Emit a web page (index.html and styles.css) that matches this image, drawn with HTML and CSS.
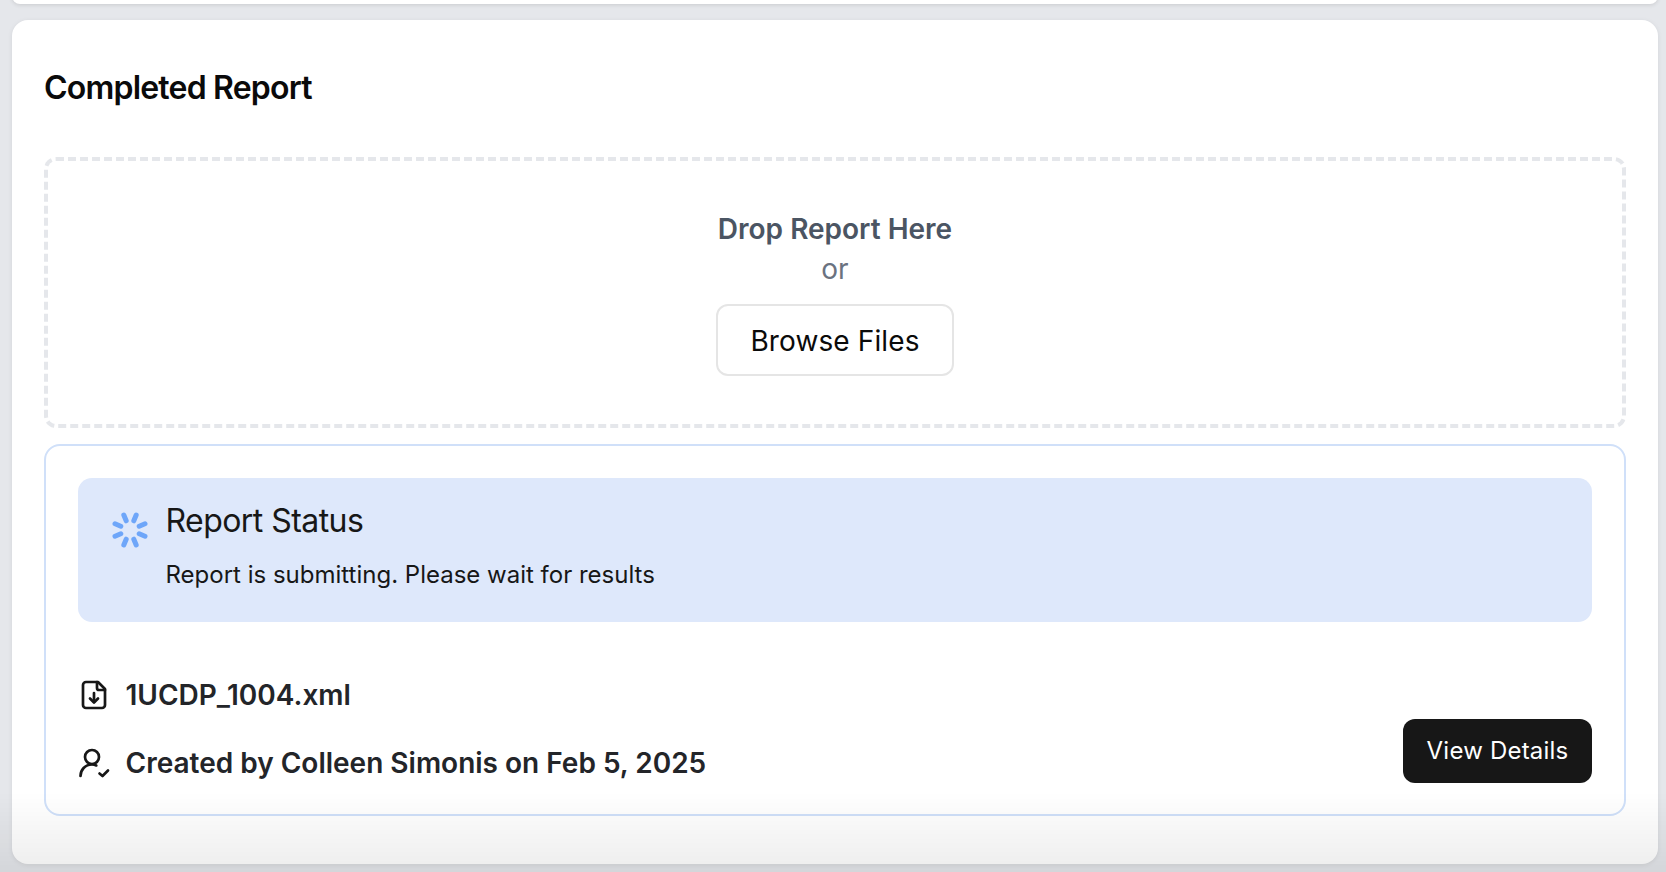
FILE: index.html
```html
<!DOCTYPE html>
<html lang="en">
<head>
<meta charset="utf-8">
<title>Completed Report</title>
<link rel="stylesheet" href="styles.css">
</head>
<body>
<div class="top-card"></div>
<main class="card">
  <h2 class="card-title">Completed Report</h2>
  <section class="dropzone">
    <p class="drop-title">Drop Report Here</p>
    <p class="drop-or">or</p>
    <button class="browse" type="button">Browse Files</button>
  </section>
  <section class="report">
    <div class="alert">
      <svg class="spinner" viewBox="0 0 36 36" fill="none" stroke="#6ea6f9" stroke-width="5" stroke-linecap="round">
        <path d="M21.800 8.800 24.200 3"/>
        <path d="M27.200 14.200 33 11.800"/>
        <path d="M27.200 21.800 33 24.200"/>
        <path d="M21.800 27.200 24.200 33"/>
        <path d="M14.200 27.200 11.800 33"/>
        <path d="M8.800 21.800 3 24.200"/>
        <path d="M8.800 14.200 3 11.800"/>
        <path d="M14.200 8.800 11.800 3"/>
      </svg>
      <div class="alert-body">
        <h3 class="alert-title">Report Status</h3>
        <p class="alert-text">Report is submitting. Please wait for results</p>
      </div>
    </div>
    <div class="report-foot">
      <div class="meta">
        <div class="meta-row">
          <svg class="meta-icon" viewBox="0 0 32 32" fill="none" stroke="#171717" stroke-width="2.700" stroke-linecap="round" stroke-linejoin="round">
            <path d="M20 3H8a3 3 0 0 0-3 3v20a3 3 0 0 0 3 3h16a3 3 0 0 0 3-3V10z"/>
            <path d="M19 3v6a2 2 0 0 0 2 2h6"/>
            <path d="M16 14v9"/>
            <path d="M12 19.500l4 4 4-4"/>
          </svg>
          <span>1UCDP_1004.xml</span>
        </div>
        <div class="meta-row">
          <svg class="meta-icon" viewBox="0 0 32 32" fill="none" stroke="#171717" stroke-width="2.700" stroke-linecap="round" stroke-linejoin="round">
            <circle cx="14" cy="10" r="7"/>
            <path d="M2.500 29c0-6 4.500-11.500 11.500-11.500 1.500 0 3 .3 4.300 .9"/>
            <path d="M21.500 26.500l3 2.500 5.500-5.500"/>
          </svg>
          <span>Created by Colleen Simonis on Feb 5, 2025</span>
        </div>
      </div>
      <button class="details" type="button">View Details</button>
    </div>
  </section>
</main>
<div class="fade"></div>
</body>
</html>
```
FILE: styles.css
```css
* { box-sizing: border-box; }
html, body { height: 100%; }
body {
  margin: 0;
  padding: 0 8px 0 12px;
  background: #e5e7eb;
  font-family: Inter, "Liberation Sans", sans-serif;
  color: #171717;
  overflow: hidden;
}
p, h2, h3 { margin: 0; }
.top-card {
  height: 16px;
  margin-top: -12px;
  background: #fff;
  border-radius: 16px;
  box-shadow: 0 1px 4px rgba(0,0,0,.12);
}
.card {
  margin-top: 16px;
  height: 844px;
  padding: 48px 32px 0;
  background: #fff;
  border-radius: 16px;
  box-shadow: 0 1px 5px rgba(0,0,0,.08);
}
.card-title {
  font-size: 32px;
  line-height: 40px;
  font-weight: 600;
  letter-spacing: -0.8px;
  color: #0a0a0a;
}
.dropzone {
  margin-top: 49px;
  height: 271px;
  border: 4px dashed #e5e7eb;
  border-radius: 12px;
  padding-top: 48px;
  display: flex;
  flex-direction: column;
  align-items: center;
}
.drop-title {
  font-size: 28px;
  line-height: 40px;
  font-weight: 600;
  color: #4b5563;
}
.drop-or {
  font-size: 28px;
  line-height: 40px;
  color: #6b7280;
}
.browse {
  margin-top: 15px;
  width: 238px;
  height: 72px;
  padding: 2px 0 0;
  background: #fff;
  border: 2px solid #e5e5e5;
  border-radius: 12px;
  font: 400 28px Inter, "Liberation Sans", sans-serif;
  letter-spacing: 0.12px;
  color: #0a0a0a;
}
.report {
  margin-top: 16px;
  height: 372px;
  border: 2px solid #d0e0f9;
  border-radius: 16px;
  padding: 32px;
}
.alert {
  height: 144px;
  background: #dee8fb;
  border-radius: 14px;
  padding: 27px 32px 0 34px;
  display: flex;
  gap: 17.5px;
}
.spinner { width: 36px; height: 36px; margin-top: 7px; flex: none; }
.alert-title {
  font-size: 32px;
  line-height: 32px;
  font-weight: 400;
  letter-spacing: -0.55px;
}
.alert-text {
  margin-top: 22px;
  font-size: 24px;
  line-height: 32px;
}
.report-foot {
  margin-top: 57px;
  display: flex;
  justify-content: space-between;
  align-items: flex-end;
}
.meta { display: flex; flex-direction: column; gap: 36px; margin-bottom: 4px; }
.meta-row {
  display: flex;
  align-items: center;
  gap: 15.5px;
  font-size: 28px;
  line-height: 32px;
  font-weight: 600;
  color: #232529;
}
.meta-icon { width: 32px; height: 32px; flex: none; }
.details {
  width: 189px;
  height: 64px;
  padding: 0 0 2px;
  background: #171717;
  border: 0;
  border-radius: 12px;
  color: #fff;
  font: 400 24px Inter, "Liberation Sans", sans-serif;
  letter-spacing: 0.2px;
}
.fade {
  position: fixed;
  left: 0;
  right: 0;
  bottom: 0;
  height: 80px;
  pointer-events: none;
  background: linear-gradient(to bottom, rgba(0,0,0,0), rgba(0,0,0,.07));
}
```
